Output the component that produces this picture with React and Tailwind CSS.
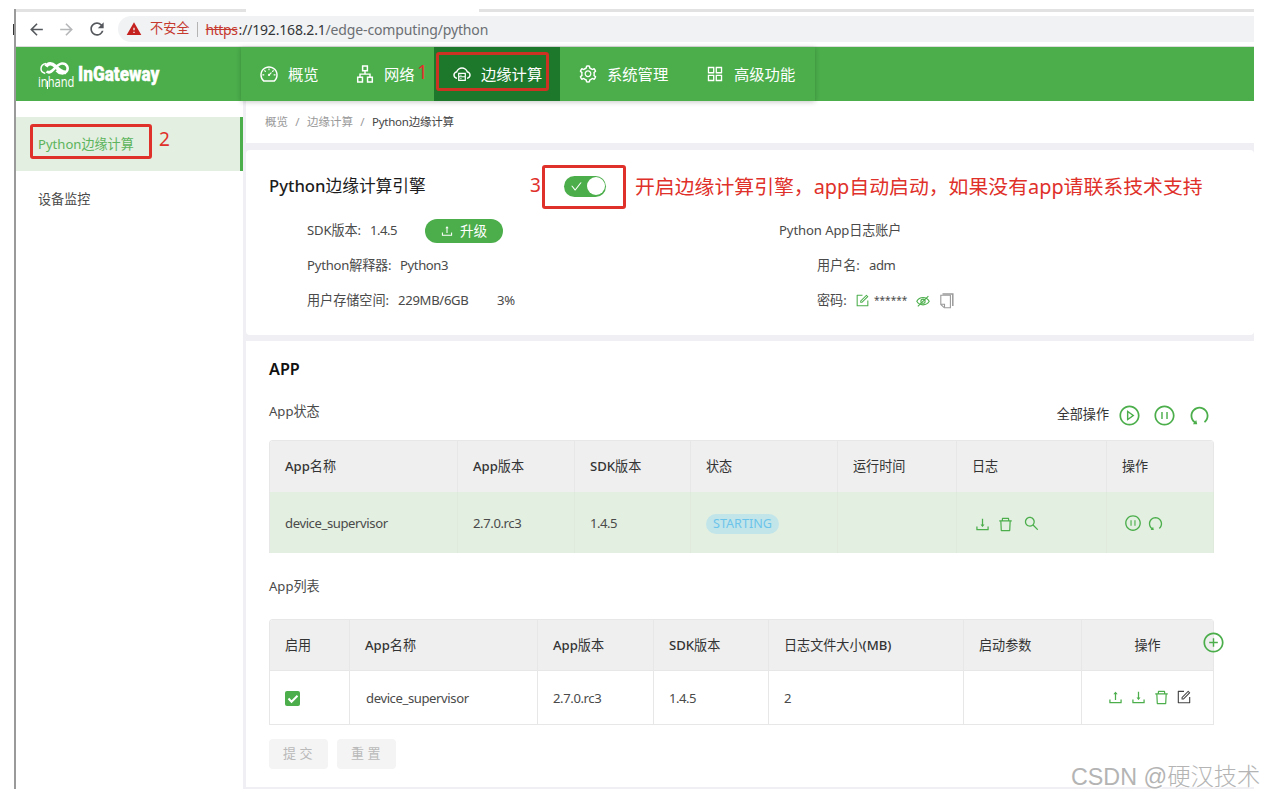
import React from "react";
import {
  AiOutlineDashboard, AiOutlineApartment, AiOutlineCloudServer, AiOutlineSetting, AiOutlineAppstore,
  AiOutlineUpload, AiOutlineDownload, AiOutlineDelete, AiOutlineSearch, AiOutlinePlayCircle,
  AiOutlinePauseCircle, AiOutlineUndo, AiOutlineForm,
  AiOutlinePlusCircle, AiOutlineCheck,
} from "react-icons/ai";
import { MdArrowBack, MdArrowForward, MdRefresh, MdWarning } from "react-icons/md";

// Heading text: Latin letters are set heavier than the Chinese glyphs beside them.
function Mixed({ text }) {
  const parts = text.split(/([A-Za-z()]+)/).filter(Boolean);
  return (
    <span>
      {parts.map((p, i) => (
        <span key={i} className={/[A-Za-z]/.test(p) ? "font-medium" : "font-normal"}>{p}</span>
      ))}
    </span>
  );
}

function HiddenEyeIcon() {
  return (
    <svg viewBox="0 0 14 14" className="size-[14px] text-[#4bae4b]" fill="none" stroke="currentColor" strokeWidth="1.1">
      <path d="M.8 7.300C3.500 2.200 10.500 2.200 13.200 7.300 10.500 12 3.500 12 .8 7.300z" />
      <circle cx="7" cy="7.200" r="2.100" />
      <path d="M1.800 12.300L12.400 2.200" />
    </svg>
  );
}

function CopyIcon() {
  return (
    <svg viewBox="0 0 16 16" className="ml-[9px] size-[16px] text-[#9a9a9a]" fill="none" stroke="currentColor">
      <path d="M3.500.9h10.300v12" strokeWidth="1.500" />
      <path d="M1.800 2.200h9.600v12.600H5.300L1.800 11.500z" strokeWidth="1.100" />
      <path d="M2 11.300h3.500v3.300" strokeWidth="1.100" />
    </svg>
  );
}

function BrowserBar() {
  return (
    <div className="flex h-[38px] flex-col">
      <div className="flex h-[3px] bg-[#e2e2e2]">
        <div className="ml-[230px] w-[233px] bg-white" />
      </div>
      <div className="flex h-[35px] items-center border-b border-[#dcdcdc] pl-[11px]">
        <MdArrowBack className="size-[19px] text-[#55585c]" />
        <MdArrowForward className="ml-[11px] size-[19px] text-[#b5b7b9]" />
        <MdRefresh className="ml-[11px] size-[20px] text-[#55585c]" />
        <div className="ml-[11px] flex h-[26px] flex-1 items-center whitespace-pre rounded-l-full bg-[#f1f2f3] pl-[8px] text-[14px]">
          <MdWarning className="size-[16px] text-[#c5221f]" />
          <span className="ml-[8px] text-[13.2px] text-[#c5392f]">不安全</span>
          <span className="ml-[7px] h-[15px] w-px bg-[#b4b4b4]" />
          <span className="ml-[8px] w-[33px] tracking-[-0.45px] text-[#c5392f] line-through">https</span>
          <span className="tracking-[-0.18px] text-[#333639]">://192.168.2.1</span>
          <span className="tracking-[-0.14px] text-[#6b6f73]">/edge-computing/python</span>
        </div>
      </div>
    </div>
  );
}

function Logo() {
  return (
    <div className="flex w-[225px] items-center pl-[22px] text-white">
      <div className="relative flex w-[36px] flex-col items-start pt-[2px]">
        <svg viewBox="0 0 32 14" className="ml-[1px] h-[14px] w-[32px]" fill="none" stroke="currentColor">
          <path d="M7 1.500C3.500 2 2 4.500 2 6.800c0 2 1.500 4 4.300 4.600" strokeWidth="1.500" />
          <path d="M7.500 9.500c5.500 4 9-7.500 15.500-8 5-.3 7 4.800 4.500 8-2.500 3-7.500 2.200-10-1" strokeWidth="2.600" />
          <path d="M7 4.500C9 1 13 1 16 4c3.500 3.400 6.500 6.800 11 6.300" strokeWidth="3.600" />
        </svg>
        <span className="-mt-[1px] origin-left scale-x-[0.93] scale-y-[1.15] font-['Open_Sans'] text-[12px] font-medium leading-[13px]">inhand</span>
        <span className="absolute left-[8.500px] top-[21px] h-[8px] w-[1.500px] bg-white" />
      </div>
      <span className="ml-[4px] origin-left scale-x-[0.86] font-[Roboto] text-[20px] font-black leading-[24px] [-webkit-text-stroke:0.4px_white]">InGateway</span>
    </div>
  );
}

const navItems = [
  { label: "概览", Icon: AiOutlineDashboard, box: "w-[96px]" },
  { label: "网络", Icon: AiOutlineApartment, box: "w-[97px]" },
  { label: "边缘计算", Icon: AiOutlineCloudServer, box: "w-[126px] bg-[#1d782b]" },
  { label: "系统管理", Icon: AiOutlineSetting, box: "w-[127px]" },
  { label: "高级功能", Icon: AiOutlineAppstore, box: "w-[128px]" },
];

function Header() {
  return (
    <header className="relative flex h-[54px] bg-[#4bae4b]">
      <Logo />
      <nav className="flex shadow-[0_1px_5px_rgba(0,0,0,0.22)]">
        {navItems.map(({ label, Icon, box }) => (
          <a key={label} className={`flex items-center pl-[18px] text-[15.3px] text-white ${box}`}>
            <Icon className="size-[20px]" />
            <span className="ml-[9px]">{label}</span>
          </a>
        ))}
      </nav>
    </header>
  );
}

function Sidebar() {
  return (
    <aside className="flex w-[227px] shrink-0 flex-col pt-[16px]">
      <a className="flex h-[54px] items-center border-r-[3px] border-[#4bae4b] bg-[#e3efe1] pl-[22px] pt-[2px] text-[#5cb45c]">Python边缘计算</a>
      <a className="flex h-[55px] items-center pl-[22px] pt-[2px]">设备监控</a>
    </aside>
  );
}

function EnginePanel() {
  return (
    <section className="h-[185px] rounded-sm bg-white pl-[23px]">
      <div className="flex h-[64px] items-center pt-[8px]">
        <h2 className="w-[295px] text-[16.7px] text-[#1c1c1c]"><Mixed text="Python边缘计算引擎" /></h2>
        <button className="flex h-[21px] w-[42px] items-center justify-between rounded-full bg-[#4bae4b] pl-[6px] pr-[1.500px]">
          <AiOutlineCheck className="size-[13px] text-white" />
          <span className="size-[18px] rounded-full bg-white" />
        </button>
      </div>
      <div className="flex pl-[38px]">
        <div className="w-[472px]">
          <div className="flex h-[34px] items-center">
            <span className="w-[63px] tracking-[-0.1px]">SDK版本:</span>
            <span className="w-[55px] tracking-[-0.5px]">1.4.5</span>
            <button className="flex h-[24px] w-[78px] items-center rounded-full bg-[#4bae4b] pl-[15px] text-white">
              <AiOutlineUpload className="size-[14px]" />
              <span className="ml-[6px] text-[13.6px]">升级</span>
            </button>
          </div>
          <div className="flex h-[35px] items-center">
            <span className="w-[93px] tracking-[-0.2px]">Python解释器:</span>
            <span className="tracking-[-0.4px]">Python3</span>
          </div>
          <div className="flex h-[35px] items-center">
            <span className="w-[91px]">用户存储空间:</span>
            <span className="w-[99px] tracking-[-0.3px]">229MB/6GB</span>
            <span className="tracking-[-0.2px]">3%</span>
          </div>
        </div>
        <div>
          <div className="flex h-[34px] items-center tracking-[-0.1px]">Python App日志账户</div>
          <div className="flex h-[35px] items-center pl-[38px]">
            <span className="w-[52px]">用户名:</span>
            <span className="tracking-[-0.4px]">adm</span>
          </div>
          <div className="flex h-[35px] items-center pl-[38px]">
            <span className="w-[38px]">密码:</span>
            <AiOutlineForm className="size-[15px] text-[#4bae4b]" />
            <span className="ml-[4px] w-[42px] text-[10.1px]">******</span>
            <HiddenEyeIcon />
            <CopyIcon />
          </div>
        </div>
      </div>
    </section>
  );
}

const statusHead = ["App名称", "App版本", "SDK版本", "状态", "运行时间", "日志", "操作"];
const listHead = ["启用", "App名称", "App版本", "SDK版本", "日志文件大小(MB)", "启动参数"];

function StatusTable() {
  return (
    <div className="mr-[40px] overflow-hidden rounded-t-[4px] border-l border-t border-[#e7e7e7]">
      <div className="grid h-[51px] grid-cols-[188px_117px_116px_147px_119px_150px_107px] bg-[#efefef] text-[#333]">
        {statusHead.map((h) => (
          <div key={h} className="flex items-center border-r border-[#e7e7e7] pl-[15px] pt-px"><Mixed text={h} /></div>
        ))}
      </div>
      <div className="grid h-[61px] grid-cols-[188px_117px_116px_147px_119px_150px_107px] bg-[#e3efe1]">
        <div className="flex items-center border-r border-[#dfeadd] pl-[15px] pt-[3px] tracking-[-0.4px]">device_supervisor</div>
        <div className="flex items-center border-r border-[#dfeadd] pl-[15px] pt-[3px] tracking-[-0.4px]">2.7.0.rc3</div>
        <div className="flex items-center border-r border-[#dfeadd] pl-[15px] pt-[3px] tracking-[-0.5px]">1.4.5</div>
        <div className="flex items-center border-r border-[#dfeadd] pl-[15px] pt-[2px]">
          <span className="flex h-[20px] w-[73px] items-center justify-center rounded-full bg-[#c2e5ea] pt-px text-[12.6px] text-[#6cc4ea]">STARTING</span>
        </div>
        <div className="border-r border-[#dfeadd]" />
        <div className="flex items-center border-r border-[#dfeadd] pl-[17px] pt-[3px] text-[#4bae4b]">
          <AiOutlineDownload className="size-[17px]" />
          <AiOutlineDelete className="ml-[6px] size-[17px]" />
          <AiOutlineSearch className="mb-[2px] ml-[9px] size-[17px]" />
        </div>
        <div className="flex items-center border-r border-[#dfeadd] pl-[17px] pt-px text-[#4bae4b]">
          <AiOutlinePauseCircle className="size-[18px]" />
          <AiOutlineUndo className="ml-[5px] size-[17px]" />
        </div>
      </div>
    </div>
  );
}

function ListTable() {
  return (
    <div className="relative mr-[40px]">
      <div className="overflow-hidden rounded-t-[4px] border-l border-t border-[#e7e7e7]">
        <div className="grid h-[51px] grid-cols-[80px_188px_116px_115px_195px_118px_132px] border-b border-[#e7e7e7] bg-[#efefef] text-[#333]">
          {listHead.map((h) => (
            <div key={h} className="flex items-center border-r border-[#e7e7e7] pl-[15px] pt-[2px]"><Mixed text={h} /></div>
          ))}
          <div className="flex items-center justify-center border-r border-[#e7e7e7] pt-[2px]">操作</div>
        </div>
        <div className="grid h-[54px] grid-cols-[80px_188px_116px_115px_195px_118px_132px] border-b border-[#e7e7e7]">
          <div className="flex items-center border-r border-[#e7e7e7] pl-[15px] pt-[2px]">
            <span className="flex size-[15px] items-center justify-center rounded-[2px] bg-[#4bae4b]">
              <svg viewBox="0 0 12 12" className="size-[12px]" fill="none" stroke="white" strokeWidth="2">
                <path d="M1.500 5.500l3 3.200 6-6" />
              </svg>
            </span>
          </div>
          <div className="flex items-center border-r border-[#e7e7e7] pl-[16px] pt-[2px] tracking-[-0.4px]">device_supervisor</div>
          <div className="flex items-center border-r border-[#e7e7e7] pl-[15px] pt-[2px] tracking-[-0.4px]">2.7.0.rc3</div>
          <div className="flex items-center border-r border-[#e7e7e7] pl-[15px] pt-[2px] tracking-[-0.5px]">1.4.5</div>
          <div className="flex items-center border-r border-[#e7e7e7] pl-[15px] pt-[2px]">2</div>
          <div className="border-r border-[#e7e7e7]" />
          <div className="flex items-center border-r border-[#e7e7e7] pl-[25px] text-[#4bae4b]">
            <AiOutlineUpload className="size-[17px]" />
            <AiOutlineDownload className="ml-[6px] size-[17px]" />
            <AiOutlineDelete className="ml-[6px] size-[17px]" />
            <AiOutlineForm className="mb-[2px] ml-[6px] size-[16px] text-[#444]" />
          </div>
        </div>
      </div>
      <AiOutlinePlusCircle className="absolute right-[-11px] top-[12px] size-[23px] text-[#4bae4b]" />
    </div>
  );
}

function AppPanel() {
  return (
    <section className="flex h-[446px] flex-col bg-white pl-[23px]">
      <h2 className="flex h-[56px] items-center pt-px text-[16.2px] font-semibold text-[#111]">APP</h2>
      <div className="flex h-[43px] justify-between pr-[43px]">
        <span className="pt-[5px]">App状态</span>
        <div className="flex h-[37px] items-center text-[#4bae4b]">
          <span className="mr-[9px] pb-px text-[#333]">全部操作</span>
          <AiOutlinePlayCircle className="size-[23px]" />
          <AiOutlinePauseCircle className="ml-[12px] size-[23px]" />
          <AiOutlineUndo className="ml-[12px] size-[23px]" />
        </div>
      </div>
      <StatusTable />
      <div className="flex h-[66px] items-center pt-[2px]">App列表</div>
      <ListTable />
      <div className="flex gap-[9px] pt-[14px]">
        <button className="h-[30px] w-[59px] rounded-[4px] bg-[#f4f4f4] pb-px pl-[2px] text-[13px] tracking-[3.500px] text-[#b9b9b9]">提交</button>
        <button className="h-[30px] w-[59px] rounded-[4px] bg-[#f4f4f4] pb-px pl-[2px] text-[13px] tracking-[3.500px] text-[#b9b9b9]">重置</button>
      </div>
    </section>
  );
}

function Annotations() {
  return (
    <div className="text-[#e0302a]">
      <div className="absolute left-[436px] top-[52px] h-[39px] w-[113px] rounded-[3px] border-[3px] border-[#cc3322]" />
      <span className="absolute left-[417px] top-[61px] text-[19px] leading-[22px]">1</span>
      <div className="absolute left-[30px] top-[124px] h-[35px] w-[122px] rounded-[3px] border-[3px] border-[#e0302a]" />
      <span className="absolute left-[159px] top-[128px] text-[19px] leading-[22px]">2</span>
      <div className="absolute left-[542px] top-[165px] h-[44px] w-[84px] rounded-[3px] border-[3px] border-[#e0302a]" />
      <span className="absolute left-[530px] top-[174px] text-[19px] leading-[22px]">3</span>
      <span className="absolute left-[635px] top-[173px] whitespace-nowrap text-[19.88px] leading-[28px]">开启边缘计算引擎，app自动启动，如果没有app请联系技术支持</span>
    </div>
  );
}

export default function App() {
  return (
    <div className="relative h-[798px] w-[1264px] overflow-hidden bg-white font-['Noto_Sans','Noto_Sans_CJK_SC',sans-serif] text-[13.1px] text-[#4a4a4a]">
      <div className="flex h-[789px] w-[1254px] pt-[9px]">
        <div className="w-[14px] pt-[15px]">
          <div className="ml-[13px] h-[11px] w-px bg-[#333]" />
        </div>
        <div className="flex flex-1 flex-col border-l-2 border-[#9a9a9a]">
          <BrowserBar />
          <Header />
          <div className="flex flex-1">
            <Sidebar />
            <main className="flex flex-1 flex-col bg-[#f0f0f4] pl-[3px]">
              <div className="flex h-[42px] items-center whitespace-pre bg-white pl-[19px] text-[11.500px] text-[#999]">
                <span>概览</span>
                <span className="w-[19px] text-center">/</span>
                <span>边缘计算</span>
                <span className="w-[19px] text-center">/</span>
                <span className="tracking-[-0.25px] text-[#444]">Python边缘计算</span>
              </div>
              <div className="h-[7px]" />
              <EnginePanel />
              <div className="h-[6px]" />
              <AppPanel />
            </main>
          </div>
        </div>
      </div>
      <Annotations />
      <span className="absolute left-[1071px] top-[761px] whitespace-nowrap font-['Liberation_Sans','Noto_Sans_CJK_SC',sans-serif] text-[23.3px] font-light leading-[32px] text-[#b4b4b4] [text-shadow:1px_1px_1px_#fff]">CSDN @硬汉技术</span>
    </div>
  );
}
